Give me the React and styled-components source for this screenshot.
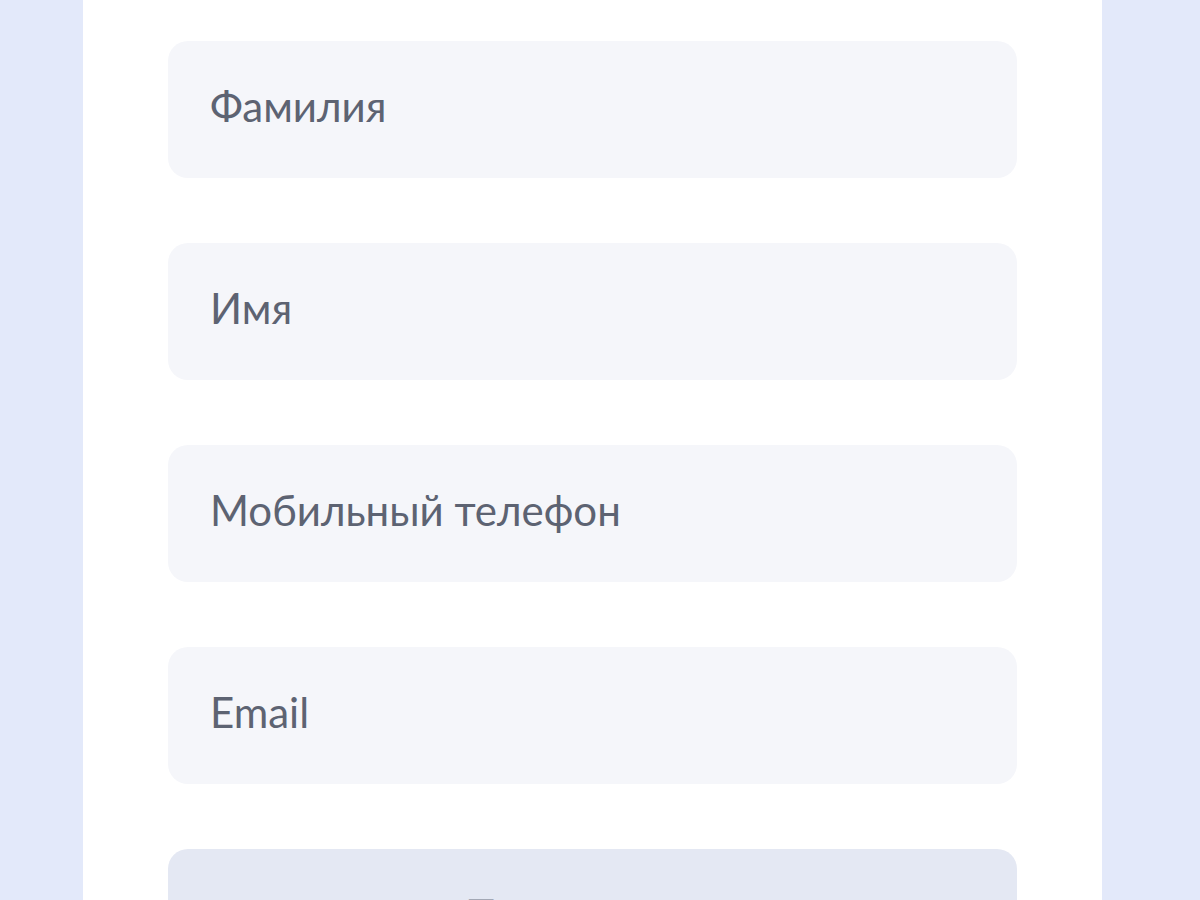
import React from 'react';
import styled, { createGlobalStyle } from 'styled-components';

const GlobalStyle = createGlobalStyle`
    html, body
    {
        margin: 0;
        padding: 0;
        background: #e3e9fa;
    }
    body
    {
        font-family: Lato, "Noto Sans", sans-serif;
        -webkit-font-smoothing: antialiased;
    }
`;

const Page = styled.div`
    display: flex;
    justify-content: center;
    min-height: 100vh;
    padding-left: 83px;
    padding-right: 98px;
`;

const Card = styled.form`
    flex: 1;
    background: #ffffff;
    display: flex;
    flex-direction: column;
    gap: 64.5px;
    padding: 40.5px 85px 60px 85px;
`;

const Field = styled.input`
    height: 137.5px;
    box-sizing: border-box;
    border: none;
    outline: none;
    border-radius: 20px;
    background: #f5f6fa;
    padding: 0 42px 7px 42px;
    font-family: Lato, "Noto Sans", sans-serif;
    font-size: 42px;
    color: #5b6170;
    &::placeholder
    {
        color: #5d6372;
        opacity: 1;
    }
`;

const Submit = styled.button`
    height: 137.5px;
    padding-bottom: 7px;
    border: none;
    border-radius: 20px;
    background: #e4e8f3;
    font-family: Lato, "Noto Sans", sans-serif;
    font-size: 42px;
    font-weight: 700;
    color: #a3a8b5;
`;

const fields = [ `Фамилия`, `Имя`, `Мобильный телефон`, `Email` ];

const App = () =>
{
    return (
        <>
            <GlobalStyle />
            <Page>
                <Card onSubmit={e => e.preventDefault()}>
                    {fields.map(name => (
                        <Field key={name} placeholder={name} />
                    ))}
                    <Submit type={`submit`} disabled>Продолжить</Submit>
                </Card>
            </Page>
        </>
    );
};

export default App;
